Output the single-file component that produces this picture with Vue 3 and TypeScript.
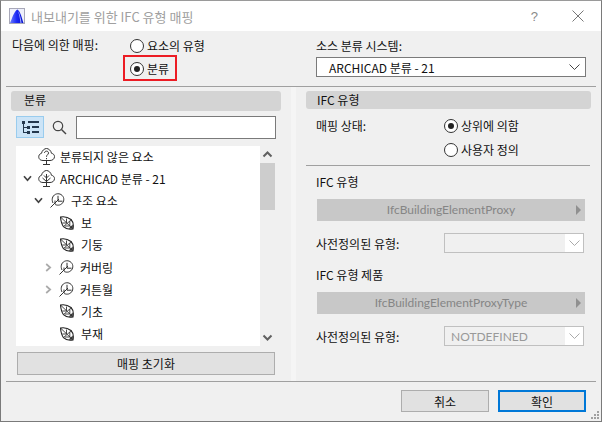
<script setup lang="ts">
interface Row { label: string; indent: number; caret: '' | 'down' | 'right'; icon: 'q' | 'tree' | 'branch' | 'leaf' }
const rows: Row[] = [
  { label: '분류되지 않은 요소', indent: 0, caret: '', icon: 'q' },
  { label: 'ARCHICAD 분류 - 21', indent: 0, caret: 'down', icon: 'tree' },
  { label: '구조 요소', indent: 1, caret: 'down', icon: 'branch' },
  { label: '보', indent: 2, caret: '', icon: 'leaf' },
  { label: '기둥', indent: 2, caret: '', icon: 'leaf' },
  { label: '커버링', indent: 2, caret: 'right', icon: 'branch' },
  { label: '커튼월', indent: 2, caret: 'right', icon: 'branch' },
  { label: '기초', indent: 2, caret: '', icon: 'leaf' },
  { label: '부재', indent: 2, caret: '', icon: 'leaf' },
]
</script>

<template>
  <div class="win">
    <header class="title">
      <svg class="logo" width="16" height="16" viewBox="0 0 16 16">
        <defs><linearGradient id="lg" x1="0" x2="1" y1="0" y2="0"><stop offset="0" stop-color="#6a7cff"/><stop offset=".5" stop-color="#1a28f5"/><stop offset="1" stop-color="#0a14c8"/></linearGradient></defs>
        <rect x=".5" y=".5" width="15" height="15" fill="#eef0fb" stroke="#a8a8b8"/>
        <path d="M1 15C3 11 5 3 8.500 1.500c3 2 4.500 9 6 13.500Z" fill="url(#lg)"/>
        <path d="M9 3c2 3 3 8 3.500 12h-1C11 10 10 6 9 3Z" fill="#aeb8ff"/>
      </svg>
      <span class="title-text">내보내기를 위한 IFC 유형 매핑</span>
      <span class="help">?</span>
      <svg class="close" width="12" height="12" viewBox="0 0 12 12"><path d="M.5.5l11 11M11.500.5l-11 11" stroke="#777" fill="none"/></svg>
    </header>
    <main class="body">
      <section class="top">
        <div class="top-left">
          <span class="map-label">다음에 의한 매핑:</span>
          <div class="map-radios">
            <label class="radio r1"><i class="dot"></i>요소의 유형</label>
            <div class="redbox"><label class="radio"><i class="dot on"></i>분류</label></div>
          </div>
        </div>
        <div class="top-right">
          <div class="src-label">소스 분류 시스템:</div>
          <div class="select src"><span>ARCHICAD 분류 - 21</span>
            <svg width="11" height="6" viewBox="0 0 11 6"><path d="M.5.5l5 5 5-5" stroke="#444" fill="none"/></svg>
          </div>
        </div>
      </section>
      <section class="panes">
        <div class="left">
          <div class="head">분류</div>
          <div class="tools">
            <button class="tool">
              <svg width="17" height="13" viewBox="0 0 17 13"><g fill="#24384e"><rect x="0" y="0" width="3" height="3"/><rect x="6" y="0" width="11" height="2"/><rect x="5" y="5" width="3" height="3"/><rect x="10" y="5" width="7" height="2"/><rect x="5" y="10" width="3" height="3"/><rect x="10" y="10" width="7" height="2"/><rect x="1" y="3" width="1" height="9"/><rect x="1" y="6" width="4" height="1"/><rect x="1" y="11" width="4" height="1"/></g></svg>
            </button>
            <svg class="lens" width="15" height="15" viewBox="0 0 15 15"><circle cx="6" cy="6" r="4.700" stroke="#444" fill="none" stroke-width="1.200"/><path d="M9.500 9.500l4.500 4.500" stroke="#444" stroke-width="1.400"/></svg>
            <div class="search"></div>
          </div>
          <div class="tree-wrap">
            <ul class="tree">
              <li v-for="r in rows" :key="r.label" class="row" :class="'ind' + r.indent">
                <span class="caret">
                  <svg v-if="r.caret === 'down'" width="9" height="7" viewBox="0 0 9 7"><path d="M1 1.200l3.500 4 3.500-4" stroke="#444" stroke-width="1.700" fill="none"/></svg>
                  <svg v-else-if="r.caret === 'right'" width="7" height="9" viewBox="0 0 7 9"><path d="M1.200 1l4 3.500-4 3.500" stroke="#aaa" stroke-width="1.700" fill="none"/></svg>
                </span>
                <svg v-if="r.icon === 'q'" class="ico" width="17" height="17" viewBox="0 0 17 17"><path d="M5 12.500C1.500 12.500.5 10 .8 8.200 1 6.500 2.500 5.500 3.500 5.300 4 2.500 6.500.5 8.500.5s4.500 2 5 4.800c1.500.2 3 1.400 3 3.200 0 2.500-2 4-4.500 4Z" fill="none" stroke="#333"/><path d="M8.500 12.500V16M5 16.500h7" stroke="#333" fill="none"/><path d="M6.500 5c0-2.500 4-2.500 4 0 0 1.700-2 1.700-2 3.800M8.500 10v1.200" stroke="#333" fill="none"/></svg>
                <svg v-else-if="r.icon === 'tree'" class="ico" width="17" height="17" viewBox="0 0 17 17"><path d="M5 12.500C1.500 12.500.5 10 .8 8.200 1 6.500 2.500 5.500 3.500 5.300 4 2.500 6.500.5 8.500.5s4.500 2 5 4.800c1.500.2 3 1.400 3 3.200 0 2.500-2 4-4.500 4Z" fill="none" stroke="#333"/><path d="M8.500 4v12.500M5 16.500h7M4.500 8l4 3.500 4-3.500M6 5.500l2.500 2.500 2.500-2.500" stroke="#333" fill="none"/></svg>
                <svg v-else-if="r.icon === 'branch'" class="ico b" width="15" height="15" viewBox="0 0 15 15"><path d="M3 10C1.500 7 2 3 5.500 1.300 8.500 0 12 1 13.500 4.500c1 3-.5 6.500-4 7.500-1.500.3-3 .2-4.300-.5" fill="none" stroke="#333"/><path d="M.5 14.500L9 6M8 2.800v5.400H12.500M5 7.500v3.500" stroke="#333" fill="none"/></svg>
                <svg v-else class="ico l" width="14" height="14" viewBox="0 0 14 14"><path d="M.5 1C4 .3 8 1.200 11 3.500c2.300 2.300 2.700 6 2 9.500-3.500.7-7 .2-9.500-2.300C1.500 8 .8 4.500.5 1Z" fill="none" stroke="#222" stroke-width="1.100"/><path d="M1 1.500L13 13M6.500 7V2.500M6.500 7H2.300M3 11L11.500 3.500M9.800 10V5M9.800 10H5" stroke="#333" fill="none" stroke-width=".9"/><path d="M8.500 12.800l4.300-4.300v4.300Z" fill="#333"/></svg>
                <span class="lbl">{{ r.label }}</span>
              </li>
            </ul>
            <div class="bar">
              <svg class="ar" width="11" height="7" viewBox="0 0 11 7"><path d="M1.500 5.500l4-4 4 4" stroke="#606060" stroke-width="2" fill="none"/></svg>
              <div class="thumb"></div>
              <svg class="ar bot" width="11" height="7" viewBox="0 0 11 7"><path d="M1.500 1.500l4 4 4-4" stroke="#606060" stroke-width="2" fill="none"/></svg>
            </div>
          </div>
          <button class="reset">매핑 초기화</button>
        </div>
        <div class="right">
          <div class="head rhead">IFC 유형</div>
          <div class="state">
            <span>매핑 상태:</span>
            <div class="state-radios">
              <label class="radio"><i class="dot on"></i>상위에 의함</label>
              <label class="radio"><i class="dot"></i>사용자 정의</label>
            </div>
          </div>
          <div class="rule"></div>
          <div class="block">
            <div class="sub">IFC 유형</div>
            <div class="pick">IfcBuildingElementProxy<i class="tri"></i></div>
            <div class="pre"><span>사전정의된 유형:</span>
              <div class="select dis"><span></span><em><svg width="11" height="6" viewBox="0 0 11 6"><path d="M.5.5l5 5 5-5" stroke="#aaa" fill="none"/></svg></em></div>
            </div>
            <div class="sub s2">IFC 유형 제품</div>
            <div class="pick">IfcBuildingElementProxyType<i class="tri"></i></div>
            <div class="pre"><span>사전정의된 유형:</span>
              <div class="select dis"><span>NOTDEFINED</span><em><svg width="11" height="6" viewBox="0 0 11 6"><path d="M.5.5l5 5 5-5" stroke="#aaa" fill="none"/></svg></em></div>
            </div>
          </div>
        </div>
      </section>
      <footer class="foot">
        <button class="btn">취소</button>
        <button class="btn ok">확인</button>
        <svg class="grip" width="10" height="10" viewBox="0 0 10 10"><g fill="#a0a0a0"><rect x="7" y="1" width="2" height="2"/><rect x="4" y="4" width="2" height="2"/><rect x="7" y="4" width="2" height="2"/><rect x="1" y="7" width="2" height="2"/><rect x="4" y="7" width="2" height="2"/><rect x="7" y="7" width="2" height="2"/></g></svg>
      </footer>
    </main>
  </div>
</template>

<style>
html, body { margin: 0; background: #fff; }
</style>

<style scoped>
* { box-sizing: border-box; }
.win {
  width: 602px; height: 422px; display: flex; flex-direction: column;
  border: 1px solid #7a7a7a; border-top-color: #9a9a9a;
  font: 12px "Noto Sans CJK KR", "Noto Sans", sans-serif; color: #111; overflow: hidden;
}
.title { height: 30px; background: #fff; display: flex; align-items: center; padding-left: 8px; flex: none; }
.logo { margin-right: 6px; }
.title-text { color: #a0a0a0; font-size: 13px; flex: 1; }
.help { color: #8a8a8a; font: 13px "Liberation Sans", sans-serif; margin-right: 34px; }
.close { margin-right: 17px; }
.body { flex: 1; background: #f0f0f0; display: flex; flex-direction: column; min-height: 0; }
.top { height: 56px; display: flex; flex: none; margin: 0 5px; border-bottom: 1px solid #a0a0a0; }
.top-left { width: 295px; display: flex; padding: 6px 0 0 6px; flex: none; }
.map-label { width: 118px; line-height: 15px; }
.map-radios { display: flex; flex-direction: column; }
.radio { display: flex; align-items: center; line-height: 14px; white-space: nowrap; }
.r1 { height: 15px; margin-top: 1px; }
.dot { width: 14px; height: 14px; border: 1px solid #333; border-radius: 50%; background: #fff; margin-right: 3px; flex: none; display: block; position: relative; }
.dot.on::after { content: ""; position: absolute; left: 3px; top: 3px; width: 6px; height: 6px; border-radius: 50%; background: #222; }
.redbox { width: 54px; height: 26px; border: 2px solid #ec1c24; margin: 2px 0 0 -7px; padding: 1px 0 0 5px; display: flex; align-items: center; }
.top-right { flex: 1; padding: 7px 0 0 15px; }
.src-label { line-height: 15px; margin-bottom: 4px; }
.select { background: #fff; border: 1px solid #7a7a7a; display: flex; align-items: center; justify-content: space-between; }
.src { width: 270px; height: 20px; padding: 0 5px 0 12px; }
.panes { flex: 1; display: flex; min-height: 0; }
.left { width: 295px; padding: 4px 0 0 10px; border-right: 5px solid #f5f5f5; flex: none; }
.head { height: 20px; width: 270px; background: #d4d4d4; border-radius: 3px; padding-left: 13px; line-height: 18px; }
.tools { display: flex; align-items: center; margin: 5px 0 0 5px; height: 22px; }
.tool { width: 28px; height: 22px; background: #cce4f7; border: 1px solid #99ccee; padding: 0; display: flex; align-items: center; justify-content: center; }
.lens { margin: 0 9px 0 8px; }
.search { width: 200px; height: 23px; background: #fff; border: 1px solid #7a7a7a; }
.tree-wrap { display: flex; margin: 8px 0 0 5px; width: 259px; height: 200px; }
.tree { width: 244px; background: #fff; margin: 0; padding: 0; list-style: none; }
.bar { width: 15px; position: relative; }
.thumb { position: absolute; top: 17px; left: 0; width: 15px; height: 47px; background: #cdcdcd; }
.ar { position: absolute; left: 2px; top: 5px; }
.ar.bot { top: auto; bottom: 5px; }
.row { height: 22.2px; display: flex; align-items: center; white-space: nowrap; position: relative; top: -1px; }
.caret { width: 12px; display: flex; justify-content: center; margin-left: 5px; flex: none; }
.ind1 { padding-left: 11px; }
.ind2 { padding-left: 21px; }
.ico { flex: none; margin-left: 5px; }
.ico.b { margin-left: 6px; }
.ind2 .ico.b { margin-left: 5px; }
.ico.l { margin-left: 6px; }
.lbl { margin-left: 5px; }
.ind1 .lbl { margin-left: 6px; }
.ind2 .lbl { margin-left: 6px; }
.ind2 .ico.l + .lbl { margin-left: 7px; }
.reset { display: block; width: 258px; height: 23px; margin: 6px 0 0 6px; background: #e1e1e1; border: 1px solid #adadad; font: inherit; color: #111; padding: 0; }
.right { flex: 1; padding: 4px 0 0 10px; min-width: 0; }
.rhead { width: 285px; height: 18px; padding-left: 11px; line-height: 17px; }
.state { display: flex; padding: 8px 0 0 10px; height: 56px; }
.state > span { width: 129px; }
.state-radios { display: flex; flex-direction: column; gap: 10px; margin-top: 2px; margin-left: -1px; }
.state-radios .radio { height: 14px; }
.rule { width: 284px; border-top: 1px solid #a0a0a0; }
.block { padding: 8px 0 0 10px; }
.sub { line-height: 16px; height: 16px; }
.s2 { margin-top: 14px; }
.pick { width: 268px; height: 22px; margin: 9px 0 0 1px; background: #c8c8c8; color: #858585; text-align: center; line-height: 21px; position: relative; font: 12px/21px Lato, sans-serif; }
.tri { position: absolute; right: 4px; top: 6px; border-left: 5px solid #909090; border-top: 5px solid transparent; border-bottom: 5px solid transparent; }
.pre { display: flex; align-items: center; margin-top: 12px; height: 20px; }
.pre > span { width: 129px; flex: none; margin-right: -1px; }
.dis { width: 140px; height: 20px; border-color: #c0c0c0; background: #f0f0f0; padding-left: 6px; color: #999; font-family: Lato, sans-serif; }
.dis em { width: 18px; height: 18px; background: #fff; display: flex; align-items: center; justify-content: center; }
.foot { height: 40px; flex: none; margin: 0 5px; border-top: 1px solid #a0a0a0; display: flex; justify-content: flex-end; padding: 8px 10px 0 0; gap: 9px; position: relative; }
.btn { width: 88px; height: 22px; background: #e1e1e1; border: 1px solid #adadad; font: inherit; color: #111; padding: 0; }
.ok { border: 2px solid #0078d7; }
.grip { position: absolute; right: -4px; bottom: 1px; }
</style>
